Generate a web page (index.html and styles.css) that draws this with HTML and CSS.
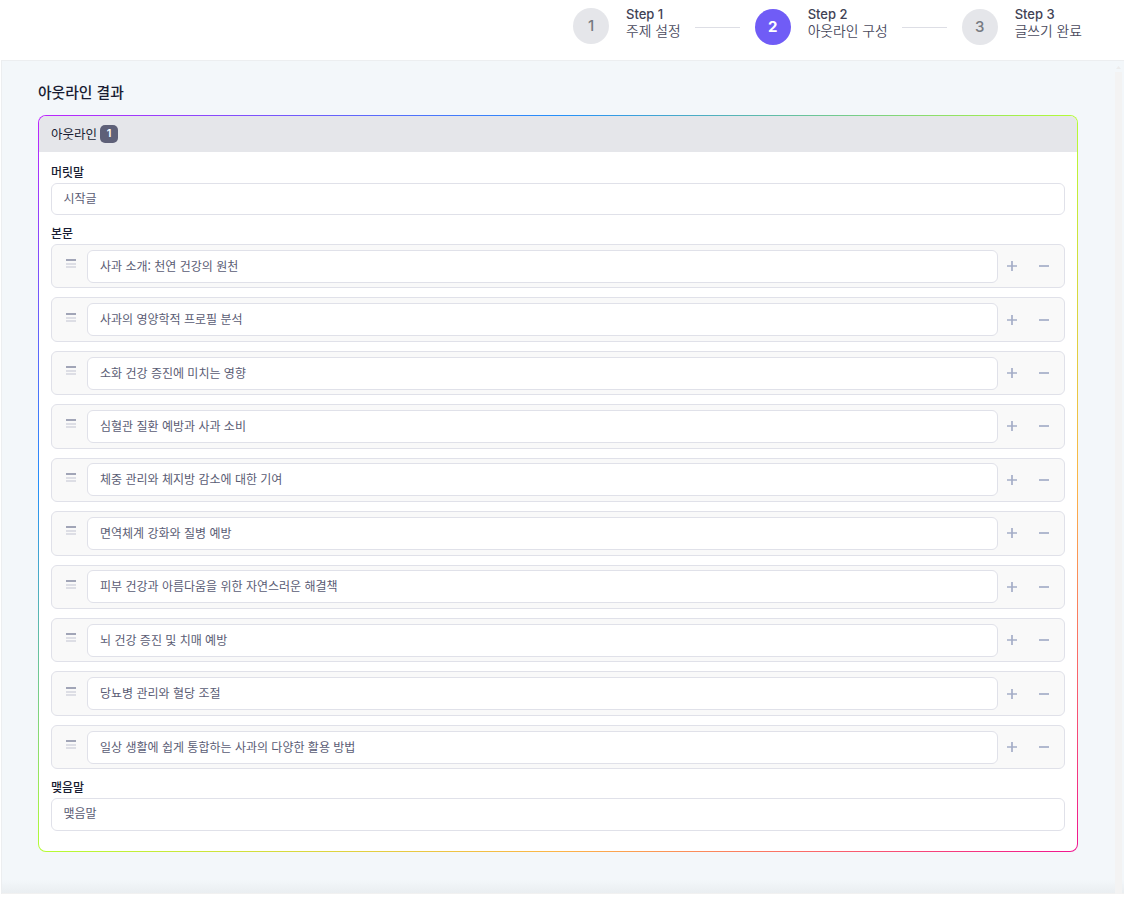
FILE: index.html
```html
<!DOCTYPE html>
<html lang="ko">
<head>
<meta charset="utf-8">
<title>아웃라인 구성</title>
<link rel="stylesheet" href="styles.css">
</head>
<body>
<header class="stepper">
  <div class="step first"><span class="num">1</span><div class="info"><b>Step 1</b><span>주제 설정</span></div></div>
  <i class="line"></i>
  <div class="step active"><span class="num">2</span><div class="info"><b>Step 2</b><span>아웃라인 구성</span></div></div>
  <i class="line"></i>
  <div class="step"><span class="num">3</span><div class="info"><b>Step 3</b><span>글쓰기 완료</span></div></div>
</header>
<div class="workspace">
  <main class="content">
    <h1 class="title">아웃라인 결과</h1>
    <section class="card">
      <div class="card-inner">
        <div class="card-head"><span class="name">아웃라인</span><span class="badge">1</span></div>
        <div class="card-body">
          <div class="label">머릿말</div>
          <div class="field">시작글</div>
          <div class="label body-label">본문</div>
          <div class="rows" id="rows"></div>
          <div class="label end-label">맺음말</div>
          <div class="field end">맺음말</div>
        </div>
      </div>
    </section>
  </main>
  <div class="scrollbar"><svg width="7" height="3" viewBox="0 0 7 3"><path d="M1 3 3.5 0 6 3z" fill="#ececec"/></svg><div class="track"></div></div>
</div>
<template id="row">
  <div class="row">
    <span class="handle"><i></i><i></i><i></i></span>
    <div class="field"></div>
    <svg class="act" width="12" height="12" viewBox="0 0 12 12"><path d="M1 6H11M6 1V11"/></svg>
    <svg class="act" width="12" height="12" viewBox="0 0 12 12"><path d="M1 6H11"/></svg>
  </div>
</template>
<script src="app.js"></script>
</body>
</html>
```
FILE: styles.css
```css
* { box-sizing: border-box; }
body {
  margin: 0;
  height: 899px;
  overflow: hidden;
  background: #fff;
  font-family: "Noto Sans CJK KR", sans-serif;
  font-size: 12px;
  color: #5a5c74;
}
.stepper {
  height: 60px;
  display: flex;
  align-items: flex-start;
  padding: 8px 0 0 573px;
}
.step { display: flex; gap: 17px; }
.num {
  width: 36px;
  height: 36px;
  margin-top: 1px;
  border-radius: 50%;
  background: #e5e6ea;
  color: #777b82;
  font: 500 15px/35px Inter, sans-serif;
  text-align: center;
}
.first .num { margin-top: 0; }
.active .num { background: #705cf6; color: #fff; font-weight: 700; }
.info { display: flex; flex-direction: column; color: #4b4b5e; }
.info b { font: 500 13px/13px Inter, sans-serif; color: #3f4254; }
.info span { font-size: 13.8px; line-height: 19px; font-weight: 350; white-space: nowrap; }
.line { width: 45px; height: 1px; margin: 19px 15px 0 14px; background: #dddee5; }
.workspace {
  height: 834px;
  display: flex;
  border-top: 1px solid #eceef0;
  border-left: 1px solid #eceef0;
  margin-left: 1px;
  background: linear-gradient(to bottom, #f3f7fa calc(100% - 14px), #eaeef1 calc(100% - 1px), #f1f1f1 calc(100% - 1px));
}
.content { width: 1113px; flex: none; padding: 20px 36px 0; }
.scrollbar { width: 7px; display: flex; flex-direction: column; padding-top: 5px; }
.track { flex: 1; margin-top: 3px; background: #f3f3f3; }
.title { margin: 0; height: 34px; font-size: 14.8px; line-height: 22px; font-weight: 500; color: #181c32; }
.card {
  width: 1040px;
  height: 737px;
  padding: 1px;
  border-radius: 8px;
  background: linear-gradient(to bottom right, #bd24fd, #2590fa 25%, #b5fc34 50%, #fcb548 75%, #fa6a68 87%, #f01490);
}
.card-inner { height: 100%; border-radius: 7px; overflow: hidden; background: #fff; }
.card-head {
  height: 36px;
  display: flex;
  align-items: center;
  gap: 3px;
  padding-left: 12px;
  background: #e5e6ea;
  color: #181c32;
  font-size: 12.5px;
}
.name { padding-bottom: 2px; }
.badge {
  width: 18px;
  height: 18px;
  border-radius: 5px;
  background: #5e6078;
  color: #fff;
  font: 600 11px/17px Inter, sans-serif;
  text-align: center;
}
.card-body { padding: 11px 12px 0; }
.label { height: 20px; line-height: 17px; font-weight: 500; color: #181c32; }
.body-label { margin-top: 9px; }
.end-label { height: 21px; margin-top: 8px; line-height: 19px; }
.field {
  height: 32px;
  border: 1px solid #e0e1e9;
  border-radius: 6px;
  background: #fff;
  padding-left: 11.5px;
  line-height: 28px;
}
.field.end { height: 33px; }
.rows { display: grid; gap: 9px; grid-auto-rows: 44.43px; }
.row {
  display: flex;
  align-items: center;
  border: 1px solid #e0e1e9;
  border-radius: 6px;
  background: #f9f9f9;
  padding-left: 14px;
}
.row .field { width: 911px; flex: none; height: 33px; margin: 0 8px 0 11px; padding-left: 12px; line-height: 29px; }
.handle { flex: none; width: 10px; margin-bottom: 4px; }
.handle i { display: block; height: 2px; margin-bottom: 1px; background: #dddee5; }
.handle i:first-child { margin-bottom: 2px; background: #a1a5b7; }
.act { flex: none; margin-right: 20px; fill: none; stroke: #a5aec8; stroke-width: 1.7; }
.act:last-child { margin-right: 0; }
```
FILE: app.js
```js
const topics = [
  "사과 소개: 천연 건강의 원천",
  "사과의 영양학적 프로필 분석",
  "소화 건강 증진에 미치는 영향",
  "심혈관 질환 예방과 사과 소비",
  "체중 관리와 체지방 감소에 대한 기여",
  "면역체계 강화와 질병 예방",
  "피부 건강과 아름다움을 위한 자연스러운 해결책",
  "뇌 건강 증진 및 치매 예방",
  "당뇨병 관리와 혈당 조절",
  "일상 생활에 쉽게 통합하는 사과의 다양한 활용 방법"
];
const list = document.getElementById("rows");
const template = document.getElementById("row");
for (const topic of topics) {
  const row = template.content.cloneNode(true);
  row.querySelector(".field").textContent = topic;
  list.append(row);
}
```
